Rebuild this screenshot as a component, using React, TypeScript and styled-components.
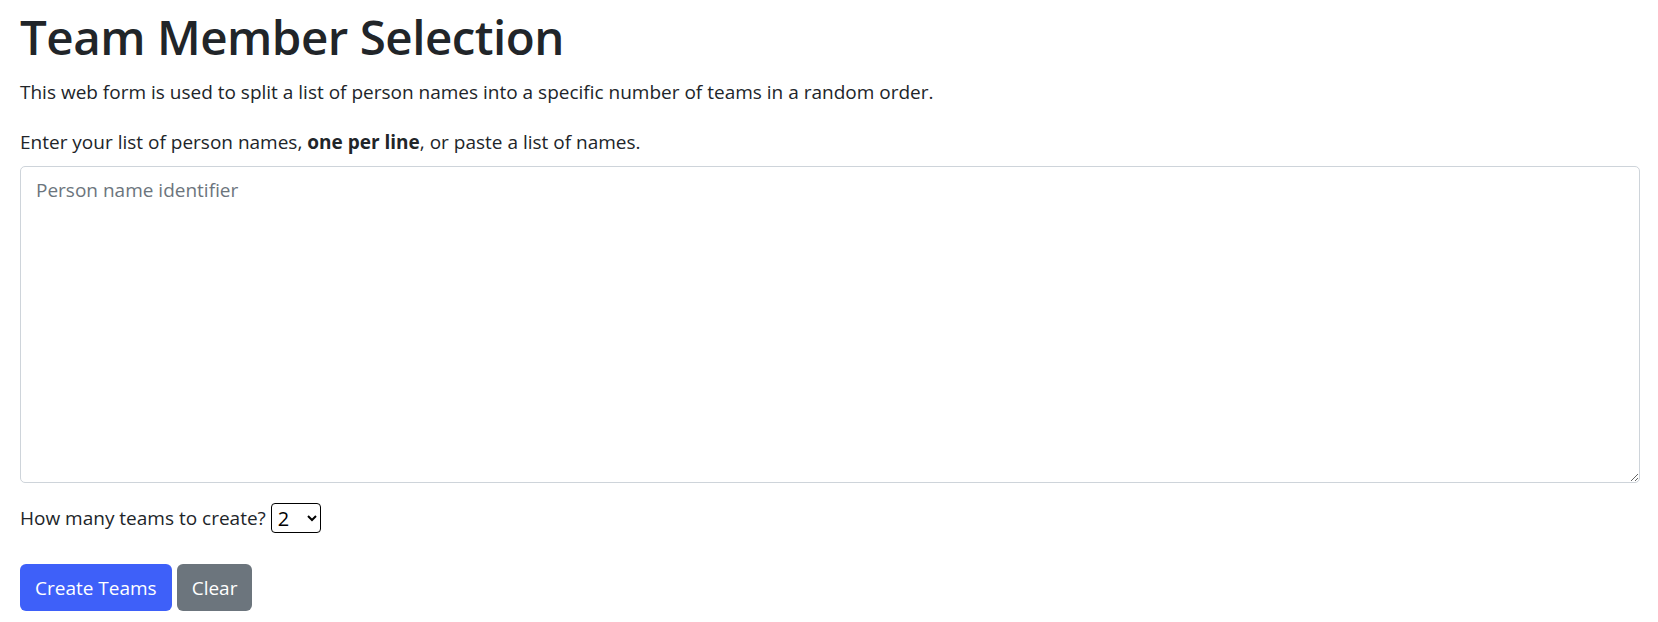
import { createGlobalStyle } from "styled-components";
import styled from "styled-components";

const GlobalStyle = createGlobalStyle`
  * { box-sizing: border-box; }
  html, body {
    margin: 0;
    padding: 0;
    background: #fff;
  }
  body {
    font-family: "Open Sans", "Noto Sans", sans-serif;
    font-size: 19px;
    line-height: 30px;
    color: #212529;
  }
`;

const Page = styled.div`
  padding: 7px 18px 0 20px;
`;

const Title = styled.h1`
  margin: 0 0 10px;
  font-size: 47.5px;
  font-weight: 600;
  line-height: 60px;
  letter-spacing: -0.5px;
`;

const Intro = styled.p`
  margin: 0 0 20px;
`;

const FieldLabel = styled.label`
  display: block;
  margin-bottom: 9px;
`;

const NamesInput = styled.textarea`
  display: block;
  width: 100%;
  height: 317px;
  padding: 8px 15px;
  margin: 0 0 20px;
  font: inherit;
  color: #212529;
  border: 1px solid #ced4da;
  border-radius: 5px;
  resize: vertical;
  outline: none;

  &::placeholder {
    color: #6c757d;
  }
`;

const CountRow = styled.div`
  display: flex;
  align-items: center;
  gap: 5px;
  height: 30px;
`;

const CountSelect = styled.select`
  width: 50px;
  height: 30px;
  font-family: inherit;
  font-size: 20px;
  color: #000;
  border: 1.5px solid #000;
  border-radius: 4px;
  background: #fff;
  padding: 0 2px;
`;

const Actions = styled.div`
  display: flex;
  gap: 5px;
  margin-top: 31px;
`;

const Button = styled.button<{ $tone: "primary" | "secondary" }>`
  height: 47px;
  padding: 0 15px;
  font-family: inherit;
  font-size: 19px;
  color: #fff;
  border: 0;
  border-radius: 6px;
  background: ${(p) => (p.$tone === "primary" ? "#3e60f9" : "#6c757d")};
  cursor: pointer;
`;

export default function App() {
  return (
    <>
      <GlobalStyle />
      <Page>
        <Title>Team Member Selection</Title>
        <Intro>
          This web form is used to split a list of person names into a specific
          number of teams in a random order.
        </Intro>
        <FieldLabel htmlFor="names">
          Enter your list of person names, <b>one per line</b>, or paste a list
          of names.
        </FieldLabel>
        <NamesInput id="names" placeholder="Person name identifier" />
        <CountRow>
          <span>How many teams to create?</span>
          <CountSelect defaultValue="2">
            {[2, 3, 4, 5, 6, 7, 8, 9, 10].map((n) => (
              <option key={n} value={n}>
                {n}
              </option>
            ))}
          </CountSelect>
        </CountRow>
        <Actions>
          <Button $tone="primary">Create Teams</Button>
          <Button $tone="secondary">Clear</Button>
        </Actions>
      </Page>
    </>
  );
}
